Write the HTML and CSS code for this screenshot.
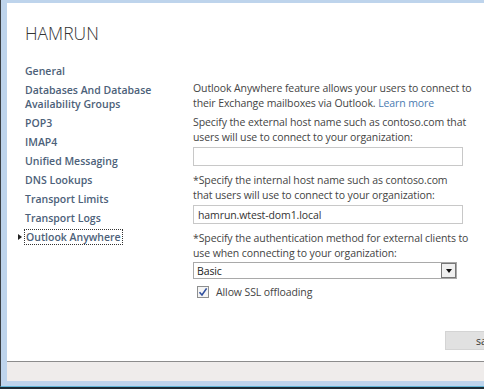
FILE: index.html
```html
<!DOCTYPE html>
<html lang="en">
<head>
    <meta charset="UTF-8">
    <title>HAMRUN</title>
    <link rel="stylesheet" href="styles.css">
</head>
<body>
    <div class="frame">
        <div class="panel">
            <h1 class="title">HAMRUN</h1>
            <div class="layout">
                <!-- Left navigation -->
                <ul class="nav">
                    <li>General</li>
                    <li>Databases And Database Availability Groups</li>
                    <li>POP3</li>
                    <li>IMAP4</li>
                    <li>Unified Messaging</li>
                    <li>DNS Lookups</li>
                    <li>Transport Limits</li>
                    <li>Transport Logs</li>
                    <li class="active"><span class="focus">Outlook Anywhere</span></li>
                </ul>

                <!-- Outlook Anywhere settings -->
                <div class="settings">
                    <p>Outlook Anywhere feature allows your users to connect to their Exchange mailboxes via Outlook. <a href="#" class="link">Learn more</a></p>
                    <label for="external">Specify the external host name such as contoso.com that users will use to connect to your organization:</label>
                    <input type="text" id="external" class="field">
                    <label for="internal">*Specify the internal host name such as contoso.com<br>that users will use to connect to your organization:</label>
                    <input type="text" id="internal" class="field" value="hamrun.wtest-dom1.local">
                    <label>*Specify the authentication method for external clients to use when connecting to your organization:</label>
                    <div class="select">
                        <span class="select-value">Basic</span>
                        <span class="select-btn"><span class="arrow"></span></span>
                    </div>
                    <div class="check">
                        <span class="box">
                            <svg width="10" height="10" viewBox="0 0 10 10"><path d="M1.5 5.2 L4 8 L8.6 1.4" fill="none" stroke="#2f4f9e" stroke-width="1.6"/></svg>
                        </span>
                        Allow SSL offloading
                    </div>
                </div>
            </div>
            <div class="actions">
                <button class="btn">save</button>
            </div>
        </div>
        <div class="footer"></div>
    </div>
</body>
</html>
```

FILE: styles.css
```css
/* General Styles */
* {
    margin: 0;
    padding: 0;
    box-sizing: border-box;
}

body {
    background: #1d2b33;
    width: 484px;
    height: 389px;
    overflow: hidden;
    font-family: 'Open Sans', 'Liberation Sans', sans-serif;
    color: #444;
}

/* Window frame */
.frame {
    width: 540px;
    height: 387px;
    background: #bed4ec;
    border-left: 1px solid #3a3f44;
    border-bottom: 1px solid #62b6d8;
    padding: 3px 0 5px 6px;
    display: flex;
    flex-direction: column;
}

.panel {
    flex: 1;
    background: #fff;
    display: flex;
    flex-direction: column;
    overflow: hidden;
}

.footer {
    height: 20px;
    background: #efeceb;
    border-top: 1px solid #8c8c8c;
}

.title {
    font-weight: 300;
    font-size: 17.5px;
    line-height: 22px;
    color: #333;
    padding: 19px 0 0 18px;
}

/* Two columns */
.layout {
    display: flex;
    padding-left: 18px;
    margin-top: 20px;
}

.nav {
    list-style: none;
    width: 168px;
    flex-shrink: 0;
}

.nav li {
    font-size: 10.5px;
    font-weight: 600;
    color: #4c6179;
    line-height: 14px;
    margin-bottom: 5px;
    padding-right: 30px;
}

.nav li.active {
    position: relative;
}

.nav li.active::before {
    content: "";
    position: absolute;
    left: -7px;
    top: 4px;
    border-left: 4px solid #222;
    border-top: 3px solid transparent;
    border-bottom: 3px solid transparent;
}

.focus {
    outline: 1px dotted #333;
    padding: 0 1px;
}

.settings {
    width: 284px;
    padding-top: 17px;
    font-size: 10.5px;
    letter-spacing: -0.1px;
    color: #444;
}

.settings p,
.settings label {
    display: block;
    line-height: 14.5px;
    margin-bottom: 3px;
}

.settings p {
    margin-bottom: 5px;
}

.link {
    color: #4b7bb1;
    text-decoration: none;
}

.field {
    display: block;
    width: 270px;
    height: 19px;
    border: 1px solid #c8c8c8;
    font-family: inherit;
    font-size: 10.5px;
    letter-spacing: -0.1px;
    color: #333;
    padding: 0 4px;
    margin-bottom: 7px;
    outline: none;
}

.select {
    display: flex;
    width: 264px;
    height: 17px;
    border: 1px solid #a9a9a9;
    align-items: center;
    margin-top: -1px;
    margin-bottom: 6px;
}

.select-value {
    flex: 1;
    padding-left: 3px;
    color: #222;
}

.select-btn {
    width: 15px;
    height: 15px;
    background: #f0f0f0;
    border: 1px solid #777;
    display: flex;
    align-items: center;
    justify-content: center;
}

.arrow {
    border-top: 4px solid #111;
    border-left: 3.5px solid transparent;
    border-right: 3.5px solid transparent;
}

.check {
    display: flex;
    align-items: center;
    gap: 7px;
    padding-left: 4px;
    color: #444;
}

.box {
    width: 12px;
    height: 12px;
    border: 1px solid #8e8f8f;
    background: #f4f4f4;
    display: flex;
    align-items: center;
    justify-content: center;
}

/* Save button */
.actions {
    margin-top: auto;
    padding: 0 0 11px 438px;
}

.btn {
    width: 90px;
    height: 19px;
    background: #e1e1e1;
    border: 1px solid #d4d4d4;
    font-family: inherit;
    font-size: 10.5px;
    color: #333;
    text-align: left;
    padding-left: 30px;
}
```
